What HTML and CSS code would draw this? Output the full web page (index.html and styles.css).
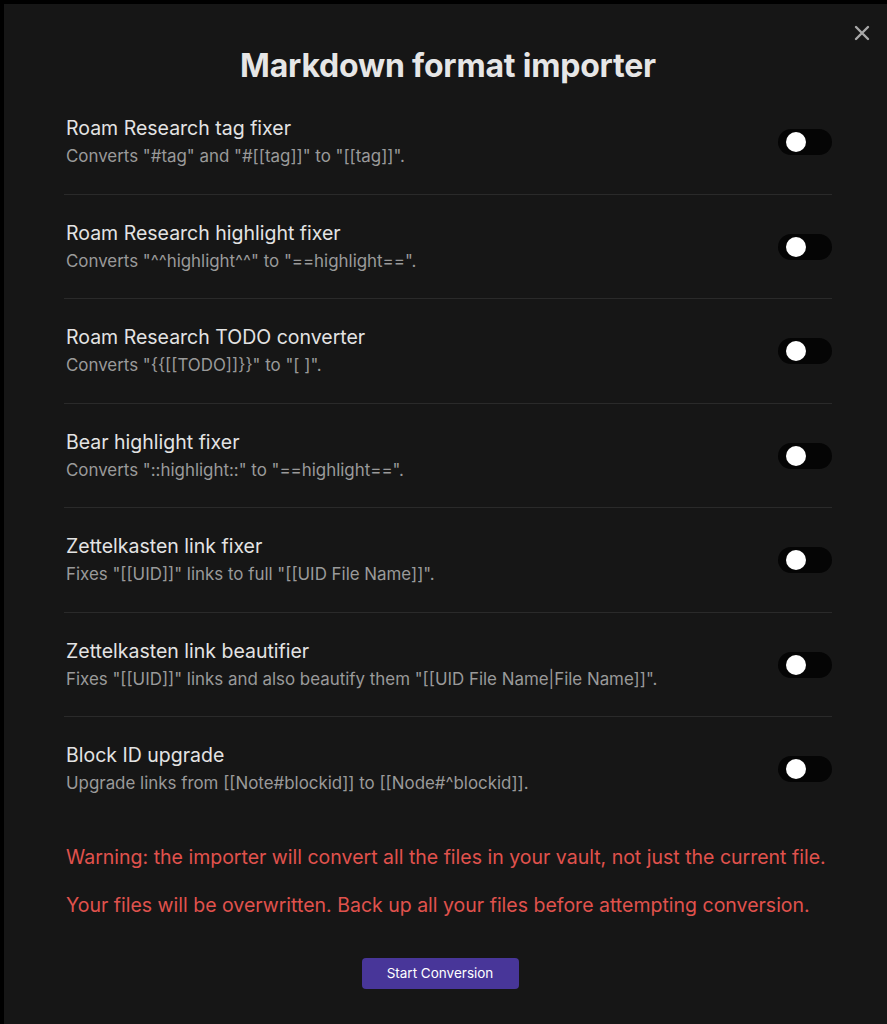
FILE: index.html
```html
<!DOCTYPE html>
<html lang="en">
<head>
  <meta charset="UTF-8" />
  <meta name="viewport" content="width=device-width, initial-scale=1.0" />
  <title>Markdown format importer</title>
  <link rel="stylesheet" href="styles.css">
</head>
<body>
  <div class="modal">
    <button class="modal-close" aria-label="Close">
      <svg width="16" height="16" viewBox="0 0 16 16"><path d="M2 2 L14 14 M14 2 L2 14" stroke="currentColor" stroke-width="2.4" stroke-linecap="round" fill="none"/></svg>
    </button>
    <h1 class="modal-title">Markdown format importer</h1>

    <div class="settings">
      <div class="setting">
        <div class="setting-info">
          <div class="setting-name">Roam Research tag fixer</div>
          <div class="setting-desc">Converts "#tag" and "#[[tag]]" to "[[tag]]".</div>
        </div>
        <div class="toggle"><span class="knob"></span></div>
      </div>
      <div class="setting">
        <div class="setting-info">
          <div class="setting-name">Roam Research highlight fixer</div>
          <div class="setting-desc">Converts "^^highlight^^" to "==highlight==".</div>
        </div>
        <div class="toggle"><span class="knob"></span></div>
      </div>
      <div class="setting">
        <div class="setting-info">
          <div class="setting-name">Roam Research TODO converter</div>
          <div class="setting-desc">Converts "{{[[TODO]]}}" to "[ ]".</div>
        </div>
        <div class="toggle"><span class="knob"></span></div>
      </div>
      <div class="setting">
        <div class="setting-info">
          <div class="setting-name">Bear highlight fixer</div>
          <div class="setting-desc">Converts "::highlight::" to "==highlight==".</div>
        </div>
        <div class="toggle"><span class="knob"></span></div>
      </div>
      <div class="setting">
        <div class="setting-info">
          <div class="setting-name">Zettelkasten link fixer</div>
          <div class="setting-desc">Fixes "[[UID]]" links to full "[[UID File Name]]".</div>
        </div>
        <div class="toggle"><span class="knob"></span></div>
      </div>
      <div class="setting">
        <div class="setting-info">
          <div class="setting-name">Zettelkasten link beautifier</div>
          <div class="setting-desc">Fixes "[[UID]]" links and also beautify them "[[UID File Name|File Name]]".</div>
        </div>
        <div class="toggle"><span class="knob"></span></div>
      </div>
      <div class="setting">
        <div class="setting-info">
          <div class="setting-name">Block ID upgrade</div>
          <div class="setting-desc">Upgrade links from [[Note#blockid]] to [[Node#^blockid]].</div>
        </div>
        <div class="toggle"><span class="knob"></span></div>
      </div>
    </div>

    <p class="warning">Warning: the importer will convert all the files in your vault, not just the current file.</p>
    <p class="warning">Your files will be overwritten. Back up all your files before attempting conversion.</p>

    <div class="actions">
      <button class="mod-cta">Start Conversion</button>
    </div>
  </div>
</body>
</html>
```

FILE: styles.css
```css
html, body {
  margin: 0;
  height: 100%;
  background: #000;
}
body {
  font-family: Inter, "Noto Sans", sans-serif;
  padding: 4px 0 0 4px;
  box-sizing: border-box;
}
.modal {
  position: relative;
  background: #161616;
  height: 100%;
  padding: 44px 55px 0 60px;
  box-sizing: border-box;
  color: #dcddde;
}
.modal-close {
  position: absolute;
  top: 19px;
  right: 15px;
  background: none;
  border: 0;
  padding: 2px;
  color: #a8a8a8;
  line-height: 0;
}
.modal-title {
  margin: 0 0 6px;
  text-align: center;
  font-size: 32px;
  line-height: 36px;
  font-weight: 700;
  color: #e6e6e6;
  letter-spacing: -0.2px;
}
.setting {
  display: flex;
  align-items: center;
  padding: 24px 0 23.5px 2px;
  border-top: 1px solid #2a2a2a;
}
.setting:first-child {
  border-top: 0;
}
.setting-info {
  flex: 1;
}
.setting-name {
  font-size: 19.5px;
  line-height: 28px;
  color: #e3e3e3;
}
.setting-desc {
  font-size: 16.9px;
  line-height: 28px;
  color: #9a9a9a;
}
.toggle {
  position: relative;
  width: 54px;
  height: 26px;
  border-radius: 13px;
  background: #050505;
}
.knob {
  position: absolute;
  left: 8px;
  top: 3px;
  width: 20px;
  height: 20px;
  border-radius: 50%;
  background: #fff;
}
.warning {
  margin: 0 0 24px 2px;
  font-size: 19.5px;
  line-height: 24px;
  color: #e0524d;
}
.warning:first-of-type {
  margin-top: 24px;
}
.actions {
  display: flex;
  justify-content: center;
  padding-top: 17px;
  padding-right: 16px;
}
.mod-cta {
  font-family: Inter, "Noto Sans", sans-serif;
  background: #483699;
  color: #fff;
  border: 0;
  border-radius: 4px;
  width: 157px;
  height: 31px;
  font-size: 13.5px;
}
```
